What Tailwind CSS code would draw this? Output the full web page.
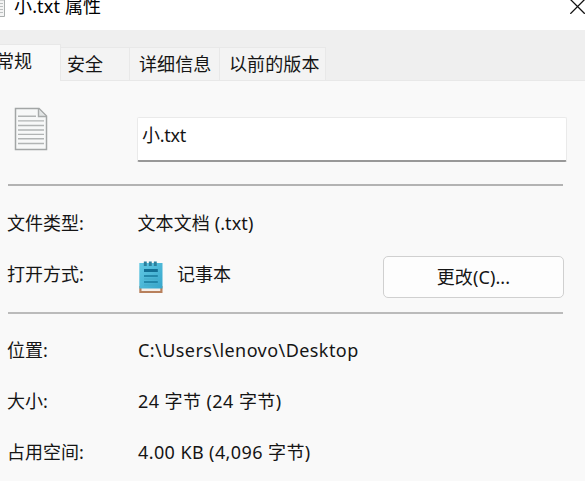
<!DOCTYPE html>
<html lang="zh-CN">
<head>
<meta charset="utf-8">
<title>小.txt 属性</title>
<script src="https://cdn.jsdelivr.net/npm/@tailwindcss/browser@4"></script>
</head>
<body class="w-[585px] h-[481px] overflow-hidden bg-[#f9f9f9] text-[18px] leading-[24px] text-[#151515] font-['Noto_Sans','Noto_Sans_CJK_SC',sans-serif] whitespace-nowrap">
<header class="h-[30px] bg-white flex items-start">
  <svg class="w-[5px] h-[17px] shrink-0" viewBox="0 0 5 17" fill="none"><path d="M0 0H4.5V16.5H0" fill="#f4f4f4" stroke="#aaaeae"/><path d="M0 3.5H3M0 6.5H3M0 9.5H3M0 12.5H3" stroke="#bcc0c0"/></svg>
  <h1 class="ml-[9px] -mt-[6px] text-black tracking-[0.15px]">小.txt 属性</h1>
  <svg class="ml-auto w-[15px] h-[14px]" viewBox="0 0 15 14" fill="none" stroke="#111" stroke-width="1.3"><path d="M0.3 -0.7L14.8 13.8M14.8 -0.7L0.3 13.8"/></svg>
</header>
<nav class="h-[51px] bg-[#efefef] flex items-end shadow-[inset_0_-1px_0_#e8e8e8] tracking-[0.1px]">
  <div class="w-[61px] h-[37px] bg-[#f9f9f9] border-t border-r border-[#e8e8e8] pt-[4px]"><span class="-ml-[4px]">常规</span></div>
  <div class="w-[69px] h-[34px] bg-[#f3f3f3] border-t border-r border-b border-[#e8e8e8] pl-[6px] pt-[4px]">安全</div>
  <div class="w-[90px] h-[34px] bg-[#f3f3f3] border-t border-r border-b border-[#e8e8e8] pl-[9px] pt-[4px]">详细信息</div>
  <div class="w-[106px] h-[34px] bg-[#f3f3f3] border-t border-r border-b border-[#e8e8e8] pl-[9px] pt-[4px]">以前的版本</div>
</nav>
<main class="pl-[8px] pr-[22px]">
  <section class="h-[105px] border-b-2 border-[#b3b3b3] flex items-start">
    <svg class="mt-[26px] ml-[6px] w-[34px] h-[44px] shrink-0" viewBox="0 0 34 44" fill="none">
      <path d="M1.5 1.5H25L32.5 9V42.5H1.5Z" fill="#f7f8f8" stroke="#a3a6a6" stroke-width="1.5"/>
      <path d="M24.5 2V9.5H32" fill="#e2e5e5" stroke="#a8abab" stroke-width="1.4"/>
      <path d="M4 9.3H22M4 13.9H30M4 18.5H30M4 23H30M4 27.4H30M4 31.8H30M4 36.5H30" stroke="#b1b4b4" stroke-width="1.4"/>
    </svg>
    <div class="mt-[36px] ml-[89px] w-[430px] h-[45px] shrink-0 bg-white border border-[#eaeaea] border-b-2 border-b-[#989898] rounded-[2px] pl-[4px] pt-[5px]"><span class="tracking-[-0.3px]">小.txt</span></div>
  </section>
  <section class="h-[128px] pt-[11px] border-b-2 border-[#bbbbbb]">
    <div class="h-[51px] flex items-center"><div class="-ml-[1px] w-[131px]">文件类型:</div><div class="-ml-[0.5px] tracking-[0.1px]">文本文档 (.txt)</div></div>
    <div class="h-[51px] flex items-center">
      <div class="-ml-[1px] w-[131px]">打开方式:</div>
      <svg class="mt-[7px] w-[25px] h-[33px]" viewBox="0 0 25 33">
        <defs><linearGradient id="pad" x2="1" y2="1"><stop stop-color="#62c9e4"/><stop offset="1" stop-color="#36a6cb"/></linearGradient></defs>
        <path d="M1.3 25H24.5V32H1.3Z" fill="#b8805c"/><path d="M3.5 27H22.3V30H3.5Z" fill="#f5eee8"/>
        <path d="M1.3 2H24.5V27.5H1.3Z" fill="url(#pad)"/>
        <path d="M7.3 0.5V5M12.3 0.5V5M17.3 0.5V5" stroke="#2b7f9c" stroke-width="2.9"/>
        <path d="M6 9.5H19.8" stroke="#126f94" stroke-width="3"/><path d="M6 15H19.8M6 21H19.8" stroke="#177a9c" stroke-width="1.6"/><path d="M6 18H19.8M6 24H19.8" stroke="#45a9c6"/>
      </svg>
      <div class="ml-[14px]">记事本</div>
      <button class="-mr-[1px] mt-[7px] ml-auto w-[181px] h-[42px] bg-[#fdfdfd] border-[1.5px] border-[#d0d0d0] rounded-[5px] pb-[1px] tracking-[0.1px]">更改(C)...</button>
    </div>
  </section>
  <section class="pt-[10px]">
    <div class="h-[51px] flex items-center"><div class="-ml-[1px] w-[131px]">位置:</div><div class="tracking-[0.43px]">C:\Users\lenovo\Desktop</div></div>
    <div class="h-[51px] flex items-center"><div class="-ml-[1px] w-[131px]">大小:</div><div class="tracking-[0.43px]">24 字节 (24 字节)</div></div>
    <div class="h-[51px] flex items-center"><div class="-ml-[1px] w-[131px]">占用空间:</div><div class="tracking-[0.4px]">4.00 KB (4,096 字节)</div></div>
  </section>
</main>
</body>
</html>
